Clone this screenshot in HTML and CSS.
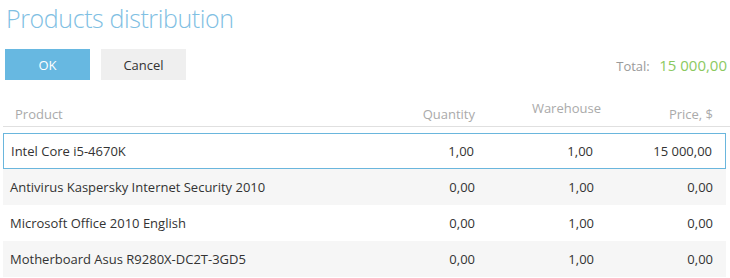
FILE: index.html
```html
<!DOCTYPE html>
<html lang="en">
<head>
    <meta charset="UTF-8">
    <meta name="viewport" content="width=device-width, initial-scale=1.0">
    <title>Products distribution</title>
    <link rel="stylesheet" href="styles.css">
</head>
<body>
    <div class="page">
        <h1>Products distribution</h1>

        <div class="toolbar">
            <button class="btn btn-ok">OK</button>
            <button class="btn btn-cancel">Cancel</button>
            <div class="total">
                <span class="total-label">Total:</span>
                <span class="total-value">15 000,00</span>
            </div>
        </div>

        <div class="grid">
            <div class="grid-head">
                <div class="cell">Product</div>
                <div class="cell num">Quantity</div>
                <div class="cell num wh">Warehouse</div>
                <div class="cell num">Price, $</div>
            </div>
            <div class="grid-row selected">
                <div class="cell">Intel Core i5-4670K</div>
                <div class="cell num">1,00</div>
                <div class="cell num">1,00</div>
                <div class="cell num">15 000,00</div>
            </div>
            <div class="grid-row odd">
                <div class="cell">Antivirus Kaspersky Internet Security 2010</div>
                <div class="cell num">0,00</div>
                <div class="cell num">1,00</div>
                <div class="cell num">0,00</div>
            </div>
            <div class="grid-row">
                <div class="cell">Microsoft Office 2010 English</div>
                <div class="cell num">0,00</div>
                <div class="cell num">1,00</div>
                <div class="cell num">0,00</div>
            </div>
            <div class="grid-row odd">
                <div class="cell">Motherboard Asus R9280X-DC2T-3GD5</div>
                <div class="cell num">0,00</div>
                <div class="cell num">1,00</div>
                <div class="cell num">0,00</div>
            </div>
        </div>
    </div>
</body>
</html>
```

FILE: styles.css
```css
body {
    margin: 0;
    font-family: "Open Sans", Arial, sans-serif;
    font-size: 13px;
    color: #333;
    background: #fff;
}
.page {
    padding: 0 0 0 3px;
}
h1 {
    margin: 0 0 0 3px;
    font-size: 25px;
    font-weight: 300;
    letter-spacing: -0.4px;
    line-height: 36px;
    color: #7fc0e3;
}
.toolbar {
    display: flex;
    align-items: center;
    margin-top: 13px;
    padding-left: 2px;
}
.btn {
    width: 85px;
    height: 31px;
    border: none;
    font-family: inherit;
    font-size: 13px;
    cursor: pointer;
    margin-right: 11px;
}
.btn-ok {
    background-color: #67b8e1;
    color: #fff;
}
.btn-cancel {
    background-color: #efefef;
    color: #333;
}
.total {
    margin-left: auto;
    padding-right: 3px;
}
.total-label {
    color: #9a9a9a;
    margin-right: 6px;
}
.total-value {
    color: #8bc95f;
    font-size: 15px;
}
.grid {
    margin-top: 18px;
    width: 723px;
}
.grid-head,
.grid-row {
    display: grid;
    grid-template-columns: 1fr 119px 119px 119px;
    align-items: center;
}
.grid-head {
    height: 28px;
    align-items: end;
    border-bottom: 1px solid #e0e0e0;
    margin-right: -4px;
    padding-right: 4px;
    color: #aaa;
    margin-bottom: 6px;
}
.grid-head .cell {
    padding-left: 12px;
    padding-bottom: 3px;
}
.grid-head .wh {
    padding-right: 6px;
    padding-bottom: 9px;
}
.grid-row {
    height: 36px;
}
.grid-row.selected {
    border: 1px solid #6ab6dd;
    height: 34px;
}
.grid-row.odd {
    background-color: #f6f6f6;
}
.cell {
    padding: 0 7px;
    white-space: nowrap;
}
.num {
    text-align: right;
    padding-right: 13px;
}
```
